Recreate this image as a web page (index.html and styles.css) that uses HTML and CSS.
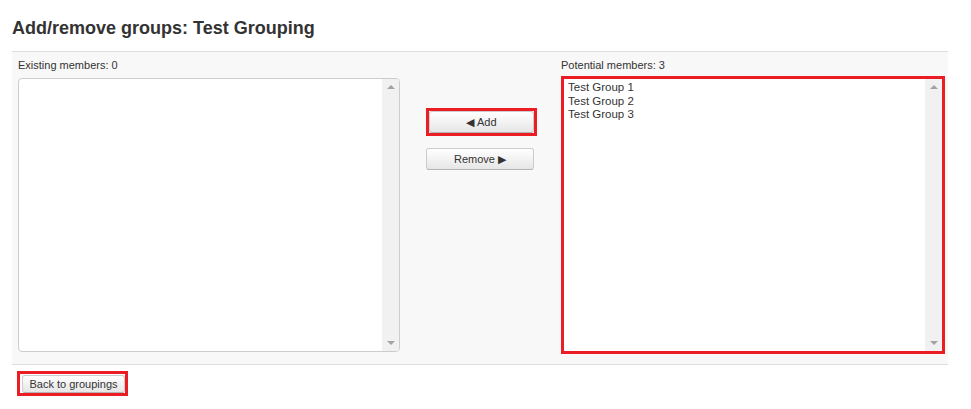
FILE: index.html
```html
<!DOCTYPE html>
<html>
<head>
<meta charset="utf-8">
<link rel="stylesheet" href="styles.css">
</head>
<body>
<h2 class="title">Add/remove groups: Test Grouping</h2>
<div class="panel">
  <div class="col">
    <div class="label">Existing members: 0</div>
    <div class="listbox plain">
      <div class="items"></div>
      <div class="scroll"><span class="up"></span><span class="down"></span></div>
    </div>
  </div>
  <div class="mid">
    <div class="hl hl-add"><button class="btn btn-add">&#9664; Add</button></div>
    <button class="btn btn-remove">Remove &#9654;</button>
  </div>
  <div class="col">
    <div class="label">Potential members: 3</div>
    <div class="listbox red">
      <div class="items">
        <div class="item">Test Group 1</div>
        <div class="item">Test Group 2</div>
        <div class="item">Test Group 3</div>
      </div>
      <div class="scroll"><span class="up"></span><span class="down"></span></div>
    </div>
  </div>
</div>
<div class="footer">
  <div class="hl hl-back"><button class="btn btn-back">Back to groupings</button></div>
</div>
</body>
</html>
```
FILE: styles.css
```css
* { box-sizing: border-box; }
body {
  margin: 0;
  background: #fff;
  font-family: "Liberation Sans", Arial, sans-serif;
  color: #333;
}
.title {
  margin: 0;
  padding: 18px 0 0 12px;
  height: 51px;
  font-size: 18px;
  font-weight: bold;
  color: #333;
}
.panel {
  margin: 0 23px 0 12px;
  background: #f8f8f8;
  border-top: 1px solid #ddd;
  border-bottom: 1px solid #ddd;
  display: grid;
  grid-template-columns: 382px 161px 384px;
  padding: 0 3px 12px 6px;
  height: 314px;
}
.label {
  font-size: 11px;
  height: 25px;
  padding-top: 7px;
  line-height: 13px;
}
.listbox {
  display: flex;
  background: #fff;
  height: 274px;
}
.listbox.plain {
  border: 1px solid #ccc;
  border-radius: 4px;
  margin-top: 1px;
  height: 274px;
}
.listbox.red {
  border: 3px solid #ec1c24;
  margin-top: -1px;
  height: 278px;
}
.items {
  flex: 1;
  padding: 2px 4px;
  font-size: 11.5px;
  line-height: 13.5px;
}
.scroll {
  width: 17px;
  background: #f1f1f1;
  display: flex;
  flex-direction: column;
  justify-content: space-between;
  align-items: center;
  padding: 6px 0 6px;
}
.plain .scroll { border-radius: 0 3px 3px 0; }
.up, .down {
  width: 0; height: 0;
  border-left: 4px solid transparent;
  border-right: 4px solid transparent;
}
.up { border-bottom: 4px solid #a3a3a3; }
.down { border-top: 4px solid #a3a3a3; }
.mid {
  display: flex;
  flex-direction: column;
  align-items: flex-start;
  padding: 56px 0 0 26px;
}
.hl {
  border: 3px solid #ec1c24;
  display: inline-block;
}
.btn {
  font-family: "Liberation Sans", Arial, sans-serif;
  font-size: 11px;
  color: #333;
  background: linear-gradient(#fff, #e6e6e6);
  border: 1px solid #ccc;
  border-bottom-color: #b3b3b3;
  border-radius: 3px;
  padding: 0;
  margin: 0;
  display: block;
}
.btn-add {
  width: 105px;
  height: 22px;
}
.btn-remove {
  width: 108px;
  height: 22px;
  margin-top: 12px;
}
.footer {
  padding: 6px 0 0 17px;
}
.hl-back { padding: 1px 0 0 2px; }
.btn-back {
  width: 103px;
  height: 18px;
  font-size: 11px;
}
```
